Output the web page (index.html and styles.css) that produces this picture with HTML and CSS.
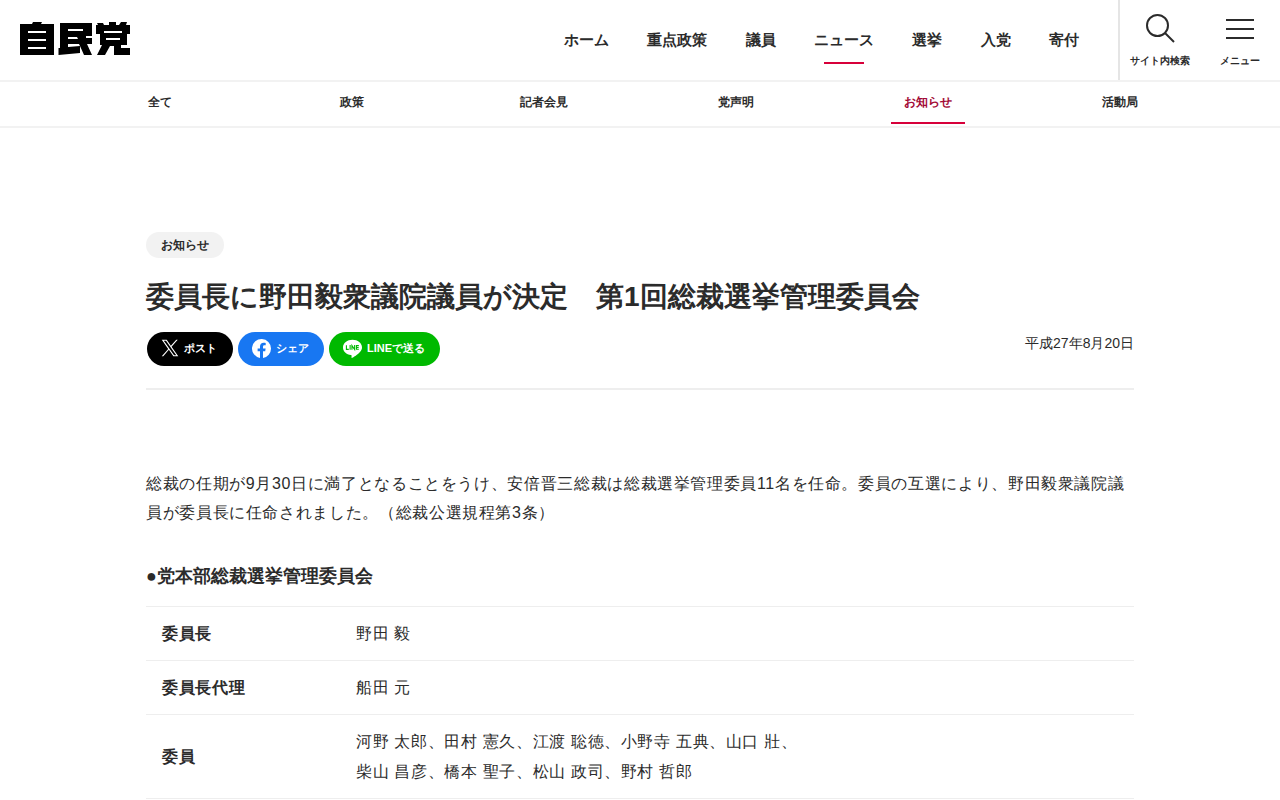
FILE: index.html
```html
<!DOCTYPE html>
<html lang="ja">
<head>
<meta charset="utf-8">
<meta name="viewport" content="width=device-width, initial-scale=1">
<title>委員長に野田毅衆議院議員が決定　第1回総裁選挙管理委員会 | 自民党</title>
<link rel="stylesheet" href="styles.css">
</head>
<body>
<header class="header">
  <a class="logo" href="#" aria-label="自民党">
    <svg viewBox="0 0 110 34" width="110" height="34" aria-hidden="true">
      <path fill-rule="evenodd" d="M0 2H12L13 0H22L21 2H34V33H0ZM8 9V11H26V9ZM8 17V19H26V17ZM8 25V27H26V25Z"/>
      <path fill-rule="evenodd" d="M40 1H72V14H66V16H72V22H67L72 33H64L60 24V31L38.500 33V26H40ZM48 7V9H63V7ZM48 15V17H58L57 15ZM48 22V25L60 24L59 22Z"/>
      <path fill-rule="evenodd" d="M77 1H83L84 3H89V0H96V3H99L101 0H107L106 3H110V12H107V23H101V26H110V33H94V24H90L85 33H77L82 23H80V12H76V3H78ZM84 9V11H102V9ZM86 16V18H100V16Z"/>
    </svg>
  </a>
  <nav class="nav" aria-label="メイン">
    <a href="#">ホーム</a>
    <a href="#">重点政策</a>
    <a href="#">議員</a>
    <a class="is-current" href="#">ニュース</a>
    <a href="#">選挙</a>
    <a href="#">入党</a>
    <a href="#">寄付</a>
  </nav>
  <div class="tools">
    <button class="tool" type="button">
      <svg viewBox="0 0 32 32" width="32" height="32" aria-hidden="true"><circle cx="13.500" cy="13.500" r="10.500"/><path d="M21 21L30 30"/></svg>
      <span>サイト内検索</span>
    </button>
    <button class="tool" type="button">
      <svg viewBox="0 0 32 32" width="32" height="32" aria-hidden="true"><path d="M2 8H30M2 17H30M2 26H30"/></svg>
      <span>メニュー</span>
    </button>
  </div>
</header>
<nav class="subnav" aria-label="ニュース">
  <ul class="subnav-list">
    <li><a href="#">全て</a></li>
    <li><a href="#">政策</a></li>
    <li><a href="#">記者会見</a></li>
    <li><a href="#">党声明</a></li>
    <li><a class="is-current" href="#">お知らせ</a></li>
    <li><a href="#">活動局</a></li>
  </ul>
</nav>
<main class="article">
  <a class="tag" href="#">お知らせ</a>
  <h1 class="title">委員長に野田毅衆議院議員が決定　第1回総裁選挙管理委員会</h1>
  <div class="meta">
    <div class="share">
      <a class="share-link share-x" href="#">
        <svg viewBox="0 0 24 24" width="18" height="18" aria-hidden="true"><path fill="#fff" d="M14.100 10.300 22.300 1h-2l-7.100 8.100L7.600 1H1l8.600 12.300L1 23h2l7.500-8.600 6 8.600H23zM11.500 13.300l-.9-1.200L3.700 2.400h3l5.600 7.900.9 1.200 7.200 10.200h-3z"/></svg>
        <span>ポスト</span>
      </a>
      <a class="share-link share-facebook" href="#">
        <svg viewBox="0 0 24 24" width="19" height="19" aria-hidden="true"><path fill="#fff" d="M24 12A12 12 0 1 0 10.100 23.900V15.500H7.100V12H10.100V9.400C10.100 6.400 11.900 4.700 14.700 4.700 16 4.700 17.300 4.900 17.300 4.900V7.900H15.800C14.300 7.900 13.900 8.800 13.900 9.700V12H17.200L16.700 15.500H13.900V23.900A12 12 0 0 0 24 12Z"/></svg>
        <span>シェア</span>
      </a>
      <a class="share-link share-line" href="#">
        <svg viewBox="0 0 24 24" width="19" height="19" aria-hidden="true"><path fill="#fff" d="M12 1C5.400 1 0 5.300 0 10.700c0 4.800 4.300 8.800 10 9.500 1.200.3.900 1 .7 3.100 0 .6.500.8 1.200.4 1.500-.8 6.600-4 9.500-7.300 1.700-1.800 2.600-3.600 2.600-5.700C24 5.300 18.600 1 12 1Z"/><path fill="none" stroke="#00b900" stroke-width="1.400" d="M4.300 7.900v5.200h3M9 7.700v6M11.300 13.700V8.300l3.400 5V7.700M20 8.400h-3V13h3M17 10.700h2.800"/></svg>
        <span>LINEで送る</span>
      </a>
    </div>
    <time class="date" datetime="2015-08-20">平成27年8月20日</time>
  </div>
  <div class="body">
    <p>総裁の任期が9月30日に満了となることをうけ、安倍晋三総裁は総裁選挙管理委員11名を任命。委員の互選により、野田毅衆議院議員が委員長に任命されました。（総裁公選規程第3条）</p>
    <h2>●党本部総裁選挙管理委員会</h2>
    <table class="members">
      <tbody>
        <tr><th scope="row">委員長</th><td>野田 毅</td></tr>
        <tr><th scope="row">委員長代理</th><td>船田 元</td></tr>
        <tr><th scope="row">委員</th><td>河野 太郎、田村 憲久、江渡 聡徳、小野寺 五典、山口 壯、<br>柴山 昌彦、橋本 聖子、松山 政司、野村 哲郎</td></tr>
      </tbody>
    </table>
  </div>
</main>
</body>
</html>
```
FILE: styles.css
```css
* { box-sizing: border-box; }

body {
  margin: 0;
  background: #fff;
  color: #2b2b2b;
  font-family: "Liberation Sans", sans-serif;
  font-size: 16px;
  text-spacing-trim: space-all;
}

a { color: inherit; text-decoration: none; }

.header {
  display: flex;
  align-items: stretch;
  min-height: 82px;
  padding-left: 20px;
  border-bottom: 2px solid #f2f2f2;
}

.logo {
  display: flex;
  align-items: center;
  padding-bottom: 2px;
}

.nav {
  display: flex;
  flex: 0 1 554px;
  align-items: center;
  justify-content: space-between;
  margin-left: auto;
  padding-right: 39px;
  font-size: 15px;
  font-weight: bold;
  line-height: 20px;
}

.nav a { position: relative; }

.nav .is-current::after {
  content: "";
  position: absolute;
  left: 10px;
  right: 10px;
  bottom: -14px;
  height: 2px;
  background: #d7003a;
}

.tools {
  display: flex;
  border-left: 2px solid #e5e5e5;
}

.tool {
  display: flex;
  flex-direction: column;
  align-items: center;
  gap: 9px;
  width: 80px;
  padding: 12px 0 0;
  border: 0;
  background: none;
  color: inherit;
  font: bold 10px/16px "Liberation Sans", sans-serif;
  white-space: nowrap;
  cursor: pointer;
}

.tool svg {
  fill: none;
  stroke: #2b2b2b;
  stroke-width: 2;
}

.subnav { border-bottom: 2px solid #f2f2f2; }

.subnav-list {
  display: flex;
  justify-content: center;
  width: 90%;
  margin: 0 auto;
  padding: 0;
  list-style: none;
}

.subnav-list li {
  display: flex;
  flex: 1;
  justify-content: center;
}

.subnav-list a {
  padding: 10px 13px;
  border-bottom: 2px solid transparent;
  margin-bottom: 2px;
  font-size: 12px;
  font-weight: bold;
  line-height: 20px;
}

.subnav-list .is-current {
  border-color: #d7003a;
  color: #a30b37;
}

.article {
  max-width: 988px;
  margin: 0 auto;
  padding-top: 104px;
}

.tag {
  display: inline-block;
  padding: 0 15px;
  border-radius: 13px;
  background: #f2f2f2;
  font-size: 12px;
  font-weight: bold;
  line-height: 26px;
  vertical-align: top;
}

.title {
  margin: 19px 0 15px;
  font-size: 28px;
  line-height: 40px;
}

.meta {
  display: flex;
  justify-content: space-between;
  align-items: flex-start;
  padding-bottom: 22px;
  border-bottom: 2px solid #eee;
}

.share {
  display: flex;
  gap: 5px;
  padding-left: 1px;
}

.share-link {
  display: flex;
  align-items: center;
  gap: 5px;
  min-width: 86px;
  height: 34px;
  padding: 0 15px 2px 14px;
  border-radius: 17px;
  color: #fff;
  font-size: 11px;
  font-weight: bold;
}

.share-x { background: #000; }
.share-facebook { background: #1877f2; }
.share-line { background: #00b900; }

.date {
  font-size: 14px;
  line-height: 22px;
}

.body {
  padding: 79px 0 40px;
  letter-spacing: 0.04em;
}

.body p {
  margin: 0 0 36px;
  line-height: 29px;
}

.body h2 {
  margin: 0 0 17px;
  font-size: 18px;
  line-height: 26px;
  letter-spacing: normal;
}

.members {
  width: 100%;
  border-collapse: collapse;
  border-top: 1px solid #eee;
  line-height: 30px;
}

.members th,
.members td {
  padding: 12px 16px 11px;
  border-bottom: 1px solid #eee;
  text-align: left;
}

.members th { width: 194px; }
```
